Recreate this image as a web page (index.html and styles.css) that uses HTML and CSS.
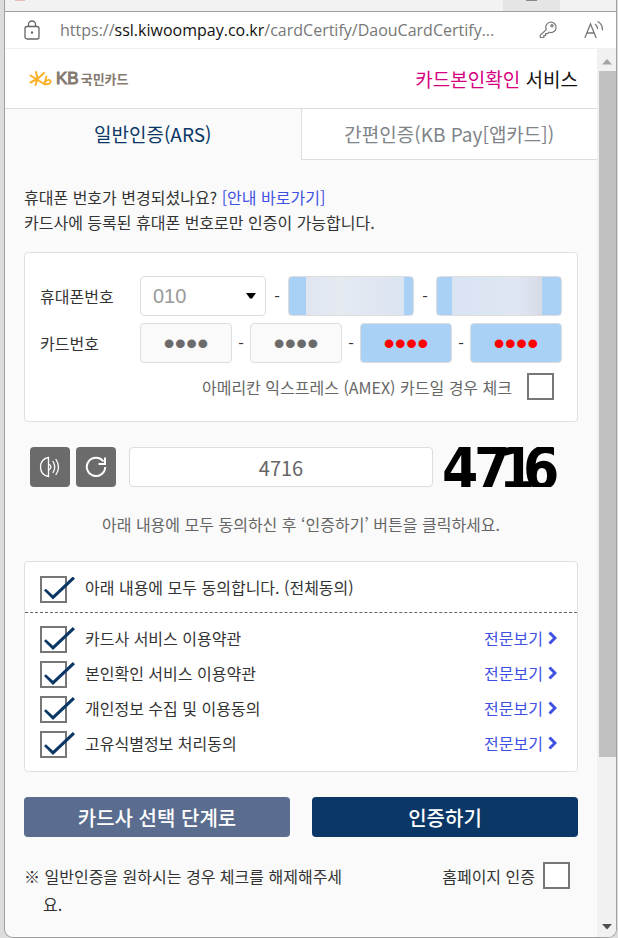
FILE: index.html
```html
<!DOCTYPE html>
<html lang="ko">
<head>
    <meta charset="UTF-8">
    <meta name="viewport" content="width=device-width, initial-scale=1.0">
    <title>카드본인확인 서비스</title>
    <link rel="stylesheet" href="styles.css">
</head>
<body>
    <div class="window">
        <div class="titlebar">
            <span class="favicon"></span>
            <span class="minimize"></span>
        </div>
        <div class="toolbar">
            <svg class="lock" width="16" height="20" viewBox="0 0 16 20" fill="none" stroke="#666" stroke-width="1.3">
                <rect x="1" y="6.5" width="14" height="12.5" rx="2"/>
                <path d="M4.5 6.5V4.5a3.5 3.5 0 0 1 7 0v2"/>
                <circle cx="8" cy="12.5" r="1.2" fill="#666" stroke="none"/>
            </svg>
            <div class="url">https://<span class="host">ssl.kiwoompay.co.kr</span>/cardCertify/DaouCardCertify...</div>
            <svg width="18" height="18" viewBox="0 0 18 18" fill="none" stroke="#777" stroke-width="1.2">
                <path d="M7.2 8.6A5.2 5.2 0 1 1 10 11.200L8.300 12.700H6.600V14.600H4.800V16.500H1.300V14.300Z" stroke-linejoin="round"/>
                <circle cx="13" cy="4.800" r="1.100"/>
            </svg>
            <svg class="read" width="20" height="18" viewBox="0 0 20 18" fill="none" stroke="#777" stroke-width="1.3" stroke-linecap="round">
                <path d="M1 16.500 6.500 3l5.500 13.500M3 12h7"/>
                <path d="M11.500 3.500q2 1.500 2 4M14 .800q4.500 2.500 4.500 8"/>
            </svg>
        </div>
        <div class="view">
            <div class="page">
                <header class="header">
                    <div class="logo">
                        <svg width="24" height="18" viewBox="0 0 24 18" fill="none" stroke="#fbb023" stroke-width="2" stroke-linecap="round">
                            <path d="M1.500 5.500 16 14.500M1.500 12.500 9 8.500 15 3M7 2l1.500 6.500L6.500 15"/>
                            <path d="M17.500 6.500 15.500 13q2 2.200 5 .5 2.500-2.500 0-3.500-2-.4-4 1.500" stroke-width="1.800"/>
                        </svg>
                        <span class="logo-kb">KB</span><span class="logo-ko">국민카드</span>
                    </div>
                    <h1 class="title"><span class="pink">카드본인확인</span> 서비스</h1>
                </header>
                <nav class="tabs">
                    <a href="#ars" class="tab active">일반인증(ARS)</a>
                    <a href="#app" class="tab">간편인증(KB Pay[앱카드])</a>
                </nav>
                <form class="content">
                    <p class="info">휴대폰 번호가 변경되셨나요? <a href="#guide">[안내 바로가기]</a><br>카드사에 등록된 휴대폰 번호로만 인증이 가능합니다.</p>

                    <div class="box fields">
                        <div class="row">
                            <label for="phone1">휴대폰번호</label>
                            <div class="inputs phone">
                                <div class="select">
                                    <select id="phone1"><option>010</option></select>
                                    <svg width="10" height="6" viewBox="0 0 10 6"><path d="M0 0h10L6 5.500H4z"/></svg>
                                </div>
                                <span class="dash">-</span>
                                <input type="text" class="masked mask-a" aria-label="휴대폰번호 가운데 자리">
                                <span class="dash">-</span>
                                <input type="text" class="masked mask-b" aria-label="휴대폰번호 끝자리">
                            </div>
                        </div>
                        <div class="row">
                            <label for="card1">카드번호</label>
                            <div class="inputs card">
                                <input type="password" class="dots" id="card1" value="0000">
                                <span class="dash">-</span>
                                <input type="password" class="dots" aria-label="카드번호 2" value="0000">
                                <span class="dash">-</span>
                                <input type="password" class="dots filled" aria-label="카드번호 3" value="0000">
                                <span class="dash">-</span>
                                <input type="password" class="dots filled" aria-label="카드번호 4" value="0000">
                            </div>
                        </div>
                        <div class="amex">
                            <label for="amex">아메리칸 익스프레스 (AMEX) 카드일 경우 체크</label>
                            <input type="checkbox" class="check" id="amex">
                        </div>
                    </div>

                    <div class="captcha">
                        <button type="button" class="icon-btn" aria-label="음성 듣기">
                            <svg width="22" height="22" viewBox="0 0 22 22" fill="none" stroke="#fff" stroke-width="1.300">
                                <path d="M9.500 1.500v19C4.500 19.500 1.500 16 1.500 11s3-8.500 8-9.500z"/>
                                <path d="M9.500 8q2.500 1 2.500 3t-2.500 3"/>
                                <path d="M14 5.500q3.500 5.500 0 11M17 3.500q5 7.500 0 15" stroke-linecap="round"/>
                            </svg>
                        </button>
                        <button type="button" class="icon-btn" aria-label="새로고침">
                            <svg width="22" height="22" viewBox="0 0 22 22" fill="none" stroke="#fff" stroke-width="2">
                                <path d="M18.500 5.500A9.200 9.200 0 1 0 20.200 11"/>
                                <path d="M20 1.500V8h-6.500"/>
                            </svg>
                        </button>
                        <input type="text" class="code" value="4716" aria-label="보안문자">
                        <svg class="code-image" width="116" height="40" viewBox="0 0 116 40">
                            <text x="-1 31 56 80" y="42">4716</text>
                        </svg>
                    </div>

                    <p class="notice">아래 내용에 모두 동의하신 후 ‘인증하기’ 버튼을 클릭하세요.</p>

                    <div class="box agree">
                        <div class="agree-all">
                            <input type="checkbox" class="check" id="all" checked>
                            <label for="all">아래 내용에 모두 동의합니다. (전체동의)</label>
                        </div>
                        <ul class="terms">
                            <li>
                                <input type="checkbox" class="check" id="term1" checked>
                                <label for="term1">카드사 서비스 이용약관</label>
                                <a href="#term1">전문보기<svg width="9" height="14" viewBox="0 0 9 14"><path d="M1.500 1.500 7 7l-5.500 5.500"/></svg></a>
                            </li>
                            <li>
                                <input type="checkbox" class="check" id="term2" checked>
                                <label for="term2">본인확인 서비스 이용약관</label>
                                <a href="#term2">전문보기<svg width="9" height="14" viewBox="0 0 9 14"><path d="M1.500 1.500 7 7l-5.500 5.500"/></svg></a>
                            </li>
                            <li>
                                <input type="checkbox" class="check" id="term3" checked>
                                <label for="term3">개인정보 수집 및 이용동의</label>
                                <a href="#term3">전문보기<svg width="9" height="14" viewBox="0 0 9 14"><path d="M1.500 1.500 7 7l-5.500 5.500"/></svg></a>
                            </li>
                            <li>
                                <input type="checkbox" class="check" id="term4" checked>
                                <label for="term4">고유식별정보 처리동의</label>
                                <a href="#term4">전문보기<svg width="9" height="14" viewBox="0 0 9 14"><path d="M1.500 1.500 7 7l-5.500 5.500"/></svg></a>
                            </li>
                        </ul>
                    </div>

                    <div class="buttons">
                        <button type="button" class="btn back">카드사 선택 단계로</button>
                        <button type="submit" class="btn submit">인증하기</button>
                    </div>

                    <div class="foot">
                        <p>※ 일반인증을 원하시는 경우 체크를 해제해주세요.</p>
                        <div class="home">
                            <label for="home">홈페이지 인증</label>
                            <input type="checkbox" class="check" id="home">
                        </div>
                    </div>
                </form>
            </div>
            <div class="scrollbar">
                <svg width="10" height="6" viewBox="0 0 10 6"><path d="M5 0 10 5.500H0z" fill="#a3a3a3"/></svg>
                <div class="track"><div class="thumb"></div></div>
                <svg width="10" height="6" viewBox="0 0 10 6"><path d="M0 0h10L5 5.500z" fill="#505050"/></svg>
            </div>
        </div>
    </div>
</body>
</html>
```
FILE: styles.css
```css
* {
    box-sizing: border-box;
}

body {
    margin: 0;
    min-height: 100vh;
    display: flex;
    padding: 0 1px 0 4px;
    background: #dcdcdc;
    font-family: "Noto Sans CJK KR", sans-serif;
    font-size: 16px;
    color: #333;
}

h1, p, ul {
    margin: 0;
    padding: 0;
}

a {
    color: #3f51e5;
    text-decoration: none;
}

svg {
    display: block;
    flex: none;
}

/* browser window */
.window {
    flex: 1;
    min-width: 0;
    display: flex;
    flex-direction: column;
    border: 1px solid #a0a0a0;
    border-top: none;
    border-radius: 0 0 9px 9px;
    overflow: hidden;
    background: #fafafa;
}

.titlebar {
    height: 12px;
    display: flex;
    justify-content: space-between;
    padding: 0 56px 0 10px;
    background: #f2f2f2;
    border-bottom: 1px solid #a0a0a0;
}

.favicon {
    width: 10px;
    height: 1px;
    background: #e9b9bd;
}

.minimize {
    width: 57px;
    background: #e5e5e5;
}

.minimize::before {
    content: "";
    display: block;
    width: 11px;
    height: 1px;
    margin: 0 auto;
    background: #888;
}

.toolbar {
    height: 37px;
    display: flex;
    align-items: center;
    padding: 0 12px 0 19px;
    background: #fff;
    border-bottom: 1px solid #f0f0f0;
}

.url {
    flex: 1;
    min-width: 0;
    padding-left: 20px;
    font-family: "Open Sans", "Noto Sans", sans-serif;
    font-size: 16px;
    line-height: 36px;
    white-space: nowrap;
    color: #777;
}

.host {
    color: #111;
}

.read {
    margin-left: 27px;
}

.view {
    flex: 1;
    display: flex;
}

.page {
    flex: 1;
    min-width: 0;
}

/* header */
.header {
    height: 59px;
    display: flex;
    justify-content: space-between;
    align-items: center;
    padding: 0 19px 0 24px;
    background: #fff;
}

.logo {
    display: flex;
    align-items: center;
    font-weight: bold;
    color: #857a6f;
}

.logo-kb {
    margin-left: 3px;
    font-family: "Liberation Sans", sans-serif;
    font-size: 17px;
    font-weight: normal;
    -webkit-text-stroke: 1px #857a6f;
}

.logo-ko {
    margin-left: 2px;
    font-size: 13px;
}

.title {
    font-size: 19px;
    font-weight: normal;
    color: #111;
}

.pink {
    color: #d6007f;
}

.tabs {
    display: flex;
}

.tab {
    flex: 1;
    height: 52px;
    border: 1px solid #ddd;
    border-right: none;
    background: #fff;
    text-align: center;
    font-size: 19px;
    line-height: 50px;
    color: #808489;
}

.tab.active {
    border-left: none;
    border-bottom: none;
    background: #fafafa;
    color: #0a3766;
}

/* form */
.content {
    padding: 25px 19px 0;
}

.info {
    line-height: 25px;
}

.box {
    background: #fff;
    border: 1px solid #e0e0e0;
    border-radius: 4px;
}

.fields {
    display: flex;
    flex-direction: column;
    gap: 7px;
    margin-top: 17px;
    padding: 23px 15px 21px;
}

.row {
    display: flex;
    align-items: center;
}

.row label {
    flex: none;
    width: 100px;
}

.inputs {
    flex: 1;
    min-width: 0;
    display: flex;
    align-items: center;
}

.inputs input,
.select {
    flex: 1;
    width: 0;
    min-width: 0;
    height: 40px;
    padding: 0;
    border: 1px solid #ddd;
    border-radius: 4px;
    background-color: #fafafa;
}

.select {
    display: flex;
    align-items: center;
    background-color: #fff;
}

.select svg {
    margin-right: 9px;
}

.select select {
    appearance: none;
    flex: 1;
    min-width: 0;
    height: 38px;
    padding: 0 12px;
    border: none;
    background: none;
    font-family: "Liberation Sans", sans-serif;
    font-size: 20px;
    color: #999;
}

.dash {
    flex: none;
    width: 22px;
    text-align: center;
}

.card .dash {
    width: 18px;
}

.inputs .mask-a {
    background: linear-gradient(90deg, #a9d0f5 14%, #dfe6f1 14%, #e5eaf1 40%, #dbe4f3 93%, #a9d0f5 93%);
}

.inputs .mask-b {
    background: linear-gradient(90deg, #a9d0f5 12%, #d9e3f2 12%, #dfe7f4 65%, #d6dae6 85%, #a9d0f5 85%);
}

.inputs .dots {
    text-align: center;
    font-family: "Liberation Sans", sans-serif;
    font-size: 32px;
    color: #6b6b6b;
}

.inputs .filled {
    background: #a9d0f5;
    color: #f00;
}

.amex {
    display: flex;
    justify-content: flex-end;
    align-items: center;
    gap: 15px;
    padding: 3px 8px 0 0;
    color: #666;
}

/* check boxes */
.check {
    appearance: none;
    position: relative;
    flex: none;
    width: 27px;
    height: 27px;
    margin: 0;
    border: 2px solid #777;
    background: #fff;
}

.check:checked::after {
    content: "";
    position: absolute;
    left: 2px;
    top: -1px;
    width: 31px;
    height: 23px;
    background: #0a3766;
    clip-path: polygon(0 61%, 6% 53%, 29% 82%, 93% 0, 100% 10%, 29% 100%);
}

/* captcha */
.captcha {
    display: flex;
    gap: 6px;
    margin-top: 25px;
    padding: 0 19px 0 6px;
}

.icon-btn {
    display: flex;
    justify-content: center;
    align-items: center;
    flex: none;
    width: 40px;
    height: 40px;
    padding: 0;
    border: none;
    border-radius: 4px;
    background: #6b6b6b;
}

.code {
    flex: 1;
    min-width: 0;
    height: 40px;
    margin: 0 4px 0 7px;
    border: 1px solid #ddd;
    border-radius: 4px;
    background: #fff;
    text-align: center;
    font-family: "Noto Sans CJK KR", sans-serif;
    font-size: 20px;
    color: #666;
}

.code-image {
    font-family: "DejaVu Sans Condensed", "DejaVu Sans", sans-serif;
    font-size: 58px;
    font-weight: bold;
    fill: #000;
}

.notice {
    margin-top: 25px;
    padding-bottom: 25px;
    text-align: center;
    line-height: 24px;
    color: #666;
}

/* agreement */
.agree label,
.agree a {
    padding-bottom: 4px;
}

.agree-all {
    display: flex;
    align-items: center;
    gap: 18px;
    height: 51px;
    padding: 4px 15px 0;
    border-bottom: 1px dashed #666;
}

.terms {
    display: flex;
    flex-direction: column;
    gap: 8px;
    padding: 13px 20px 13px 15px;
    list-style: none;
}

.terms li {
    display: flex;
    align-items: center;
    gap: 18px;
    height: 27px;
}

.terms a {
    display: flex;
    align-items: center;
    gap: 5px;
    margin-left: auto;
}

.terms svg {
    fill: none;
    stroke: #3f51e5;
    stroke-width: 3;
}

/* buttons */
.buttons {
    display: flex;
    gap: 22px;
    margin-top: 25px;
}

.btn {
    flex: 1;
    height: 40px;
    padding: 0;
    border: none;
    border-radius: 4px;
    font-family: "Noto Sans CJK KR", sans-serif;
    font-size: 20px;
    font-weight: 500;
    color: #fff;
}

.back {
    background: #5a6d8e;
}

.submit {
    background: #0a3766;
}

.foot {
    display: flex;
    justify-content: space-between;
    align-items: flex-start;
    margin-top: 25px;
}

.foot p {
    width: 60%;
    padding-left: 19px;
    text-indent: -19px;
    line-height: 28px;
    word-break: break-all;
}

.home {
    display: flex;
    align-items: center;
    gap: 8px;
    padding-right: 8px;
}

/* scrollbar */
.scrollbar {
    width: 19px;
    display: flex;
    flex-direction: column;
    align-items: center;
    padding: 10px 0 7px;
    background: #f1f1f1;
}

.track {
    flex: 1;
    width: 100%;
    margin: 6px 0;
    padding-left: 2px;
}

.thumb {
    height: 81%;
    background: #c1c1c1;
}
```
